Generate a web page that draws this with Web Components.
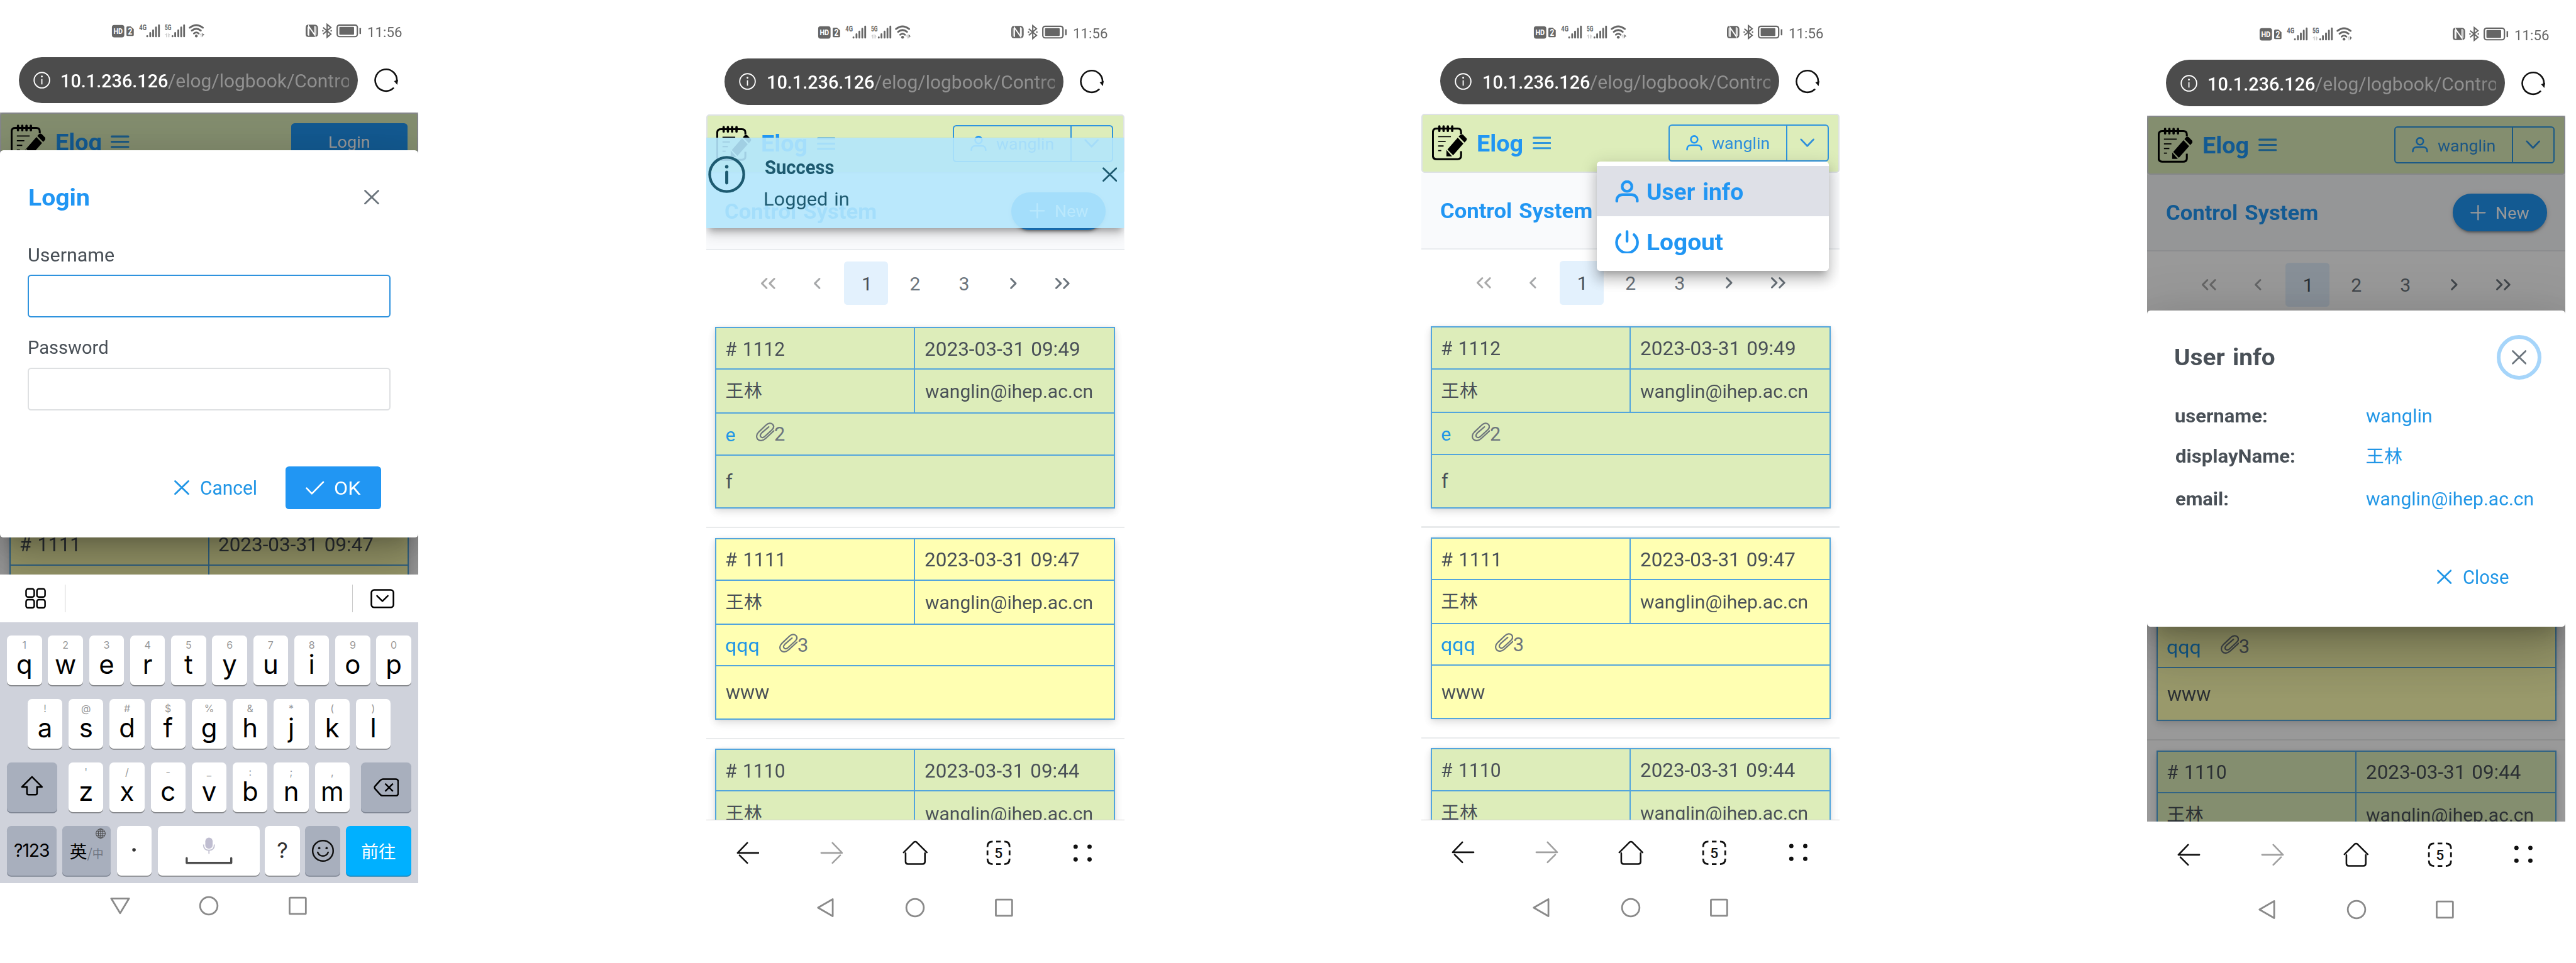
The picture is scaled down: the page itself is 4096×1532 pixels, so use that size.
<!DOCTYPE html>
<html lang="en">
<head>
<meta charset="utf-8">
<title>Elog mobile</title>
<style>
body{margin:0;background:#fff;overflow:hidden;font-family:Roboto,"Noto Sans CJK SC",sans-serif;color:#495057}
main{zoom:.61575;width:6652px;height:2488px;display:flex;align-items:flex-start;overflow:hidden}
phone-shell:nth-child(2){margin:4px 0 0 743px}
phone-shell:nth-child(3){margin:3px 0 0 768px}
phone-shell:nth-child(4){margin:8px 0 0 794px}
</style>
</head>
<body>
<main>
  <phone-shell>
    <app-page style="height:1194px">
      <app-header><login-button></login-button></app-header>
      <book-bar></book-bar>
      <page-nav></page-nav>
      <log-list style="margin-top:-8.5px"></log-list>
      <login-dialog slot="over"></login-dialog>
    </app-page>
    <soft-keyboard></soft-keyboard>
    <nav-bar down></nav-bar>
  </phone-shell>
  <phone-shell>
    <app-page>
      <app-header><user-button></user-button></app-header>
      <book-bar></book-bar>
      <page-nav></page-nav>
      <log-list></log-list>
      <toast-message slot="over"></toast-message>
    </app-page>
    <browser-tools></browser-tools>
    <nav-bar></nav-bar>
  </phone-shell>
  <phone-shell>
    <app-page>
      <app-header><user-button></user-button></app-header>
      <book-bar></book-bar>
      <page-nav></page-nav>
      <log-list></log-list>
      <user-menu slot="over"></user-menu>
    </app-page>
    <browser-tools></browser-tools>
    <nav-bar></nav-bar>
  </phone-shell>
  <phone-shell>
    <app-page>
      <app-header><user-button></user-button></app-header>
      <book-bar></book-bar>
      <page-nav></page-nav>
      <log-list></log-list>
      <info-dialog slot="over"></info-dialog>
    </app-page>
    <browser-tools style="border-color:transparent"></browser-tools>
    <nav-bar></nav-bar>
  </phone-shell>
</main>
<script>
const define = (name, html) => customElements.define(name, class extends HTMLElement {
  constructor() {
    super();
    this.attachShadow({mode: 'open'}).innerHTML =
      '<style>:host{display:block;box-sizing:border-box}*{box-sizing:border-box}svg{display:block;flex:none}</style>' +
      (typeof html === 'function' ? html(this) : html);
  }
});

/* A single line of text whose glyph width and letter spacing are tuned so its ink spans exactly "w" pixels. */
const ctx = document.createElement('canvas').getContext('2d');
customElements.define('fit-text', class extends HTMLElement {
  connectedCallback() {
    if (this.shadowRoot) return;
    const size = +this.getAttribute('s'), w = +this.getAttribute('w'), wt = this.getAttribute('wt') || 400;
    const text = this.getAttribute('t'), cjk = /[\u4e00-\u9fff]/.test(text);
    ctx.font = `${wt} ${size}px Roboto,"Noto Sans CJK SC",sans-serif`;
    const m = ctx.measureText(text), n = text.length;
    const ws = size * .07, spaces = text.split(' ').length - 1;
    const ink = m.actualBoundingBoxLeft + m.actualBoundingBoxRight + ws * spaces;
    const k = cjk || n < 2 ? 1 : Math.min(1.1, Math.max(.94, w / ink));
    const ls = n > 1 ? (w / k - ink) / (n - 1) : 0;
    this.attachShadow({mode: 'open'}).innerHTML =
      `<style>:host{display:block;flex:none;width:${w}px;height:${size}px;white-space:pre;line-height:${size}px;font-size:${size}px;font-weight:${wt};letter-spacing:${ls}px;word-spacing:${ws}px}
       span{display:block;margin-left:${m.actualBoundingBoxLeft * k}px;padding-top:${cjk ? .03 : .045}em;transform:scaleX(${k});transform-origin:0 0}</style><span></span>`;
    this.shadowRoot.querySelector('span').textContent = text;
  }
});
const T = (t, s, w, wt = 400, st = '') => `<fit-text t="${t}" s="${s}" w="${w}" wt="${wt}" style="${st}"></fit-text>`;
const X = (c, w = 39, h = 38, sw = 4.6) => `<svg width="${w}" height="${h}" viewBox="0 0 39 38" fill="none" stroke="${c}" stroke-width="${sw}" stroke-linecap="round"><path d="M2.5 2.5 36.5 35.5M36.5 2.5 2.5 35.5"/></svg>`;
const user = (w, h, sw) => `<svg width="${w}" height="${h}" viewBox="0 0 42 40" fill="none" stroke="#2196f3" stroke-width="${sw}" stroke-linecap="round"><circle cx="21" cy="11" r="8.8"/><path d="M2.5 37.5V36C2.5 30 6.500 26 13 26H29C35.500 26 39.500 30 39.500 36V37.500"/></svg>`;

define('phone-shell', `<style>:host{width:1080px;flex:none}</style><status-bar></status-bar><url-bar></url-bar><slot></slot>`);

define('status-bar', `<style>:host{display:flex;height:147px;padding:60px 43px 0 288px;justify-content:space-between;color:#666}div{display:flex;align-items:flex-start}</style>
<svg width="246" height="40" viewBox="0 0 246 40" fill="#666">
 <rect x="1.500" y="4.500" width="32" height="32" rx="6"/><text x="5.500" y="28" font-size="21" font-weight="700" fill="#fff" textLength="24" lengthAdjust="spacingAndGlyphs">HD</text>
 <path d="M42 8h8l8 7v15q0 3-3 3H42q-3 0-3-3V11q0-3 3-3Z"/><text x="43" y="29" font-size="23" font-weight="700" fill="#fff" textLength="11" lengthAdjust="spacingAndGlyphs">2</text>
 <text x="72" y="18" font-size="20" font-weight="700" textLength="19" lengthAdjust="spacingAndGlyphs">4G</text>
 <text x="138" y="18" font-size="20" font-weight="700" textLength="17" lengthAdjust="spacingAndGlyphs">5G</text>
 <g stroke="#666" stroke-width="4.600" stroke-linecap="round"><path d="M92.700 33v1M100.500 25v9M108 18v16M115.500 11v23M123 5v29M158 33v1M165 25v9M173 18v16M180.500 11v23M188 5v29"/></g>
 <path d="M144 25v11h-2.500V30h-4ZM147 36V25l6 6h-3v5Z" fill="#ccc"/>
 <g fill="none" stroke="#666" stroke-width="4.600" stroke-linecap="round"><path d="M202.500 11.500Q219.500-2 236.500 11.500M208 19Q219.500 9.500 231 19M213.500 26.500Q219.500 21 225.500 26.500"/></g><circle cx="219.500" cy="33" r="3.600"/>
 <path d="M233 25v11h-2V31h-4Z" fill="#ccc"/><path d="M235 36V25l6 6h-3Z"/>
</svg>
<div><svg width="144" height="40" viewBox="0 0 144 40" fill="#666" style="margin-right:17px">
 <path d="M7 3.500h16q9 0 9 9v14q0 9-9 9H7Q0 35.500 0 28V12Q0 3.500 7 3.500Z"/><path d="M8 32V8L24 31V7" fill="none" stroke="#fff" stroke-width="3"/><path d="M5 9v22M27 9v21" stroke="#fff" stroke-width="1.500"/>
 <path d="M45 11 65 28 55.500 36V3L65 11 45 28" fill="none" stroke="#666" stroke-width="3.400"/><circle cx="44.500" cy="19.500" r="2"/><circle cx="66" cy="19.500" r="2"/>
 <rect x="81.500" y="4.500" width="52" height="30" rx="6" fill="none" stroke="#666" stroke-width="3.600"/><rect x="87" y="9.500" width="38" height="20" rx="2"/><rect x="139" y="12" width="4" height="16" rx="1.500"/>
</svg>${T('11:56', 35.5, 87, 400, 'margin-top:5px')}</div>`);

define('url-bar', `<style>:host{display:flex;height:144px;padding-left:48px;align-items:flex-start}
.p{display:flex;align-items:center;width:876px;height:120px;border-radius:60px;background:#4c4c4c;color:#fff;padding-left:38px}
.g{width:467px;overflow:hidden;color:#919191;padding:8px 0;margin-left:1px;-webkit-mask:linear-gradient(90deg,#000 85%,rgba(0,0,0,.7))}</style>
<div class="p"><svg width="44" height="44" fill="none" stroke="#fff" stroke-width="3"><circle cx="22" cy="22" r="20"/><path d="M22 19v14"/><circle cx="22" cy="12.500" r="2.400" fill="#fff" stroke="none"/></svg>
${T('10.1.236.126', 49, 273, 500, 'margin-left:30px')}<div class="g">${T('/elog/logbook/Contro', 49, 471)}</div></div>
<svg width="64" height="64" viewBox="0 0 64 64" style="margin:28px 0 0 40px" fill="none" stroke="#111" stroke-width="4.200" stroke-linecap="round"><path d="M51 52.500A28 28 0 1 1 60 35"/><path d="M54.500 34.500 62 32 60.500 41.500Z" fill="#111" stroke-width="2"/></svg>`);

define('app-page', `<style>:host{height:1823px;position:relative;overflow:hidden}</style><slot></slot><slot name="over"></slot>`);

define('app-header', `<style>:host{display:flex;height:153px;align-items:center;border:3.300px solid #dee2e6;border-radius:8px;background:#ddedba;padding:0 25px 2px 24px;color:#2196f3}
div{flex:1;display:flex;justify-content:flex-end}</style>
<svg width="90" height="91" viewBox="39 44 271 272" fill="none" stroke="#000"><path d="M265 112V98Q265 70 238 70H75Q46 70 46 98V282Q46 308 75 308H238Q265 308 265 282V246" stroke-width="15"/>
<path d="M96 53v35M129 53v35M162 53v35M196 53v35" stroke-width="18" stroke-linecap="round"/><path d="M87 133H186M87 169.500H145M87 205.500H129M87 242H111" stroke-width="9"/>
<g fill="#000" stroke="none"><path d="M239 141 283 187 203 278 159 232ZM246 132 258 119Q269 109 280 118L304 142Q315 152 305 164L292 179ZM151 236 195 286H151Z"/></g></svg>
${T('Elog', 60, 114, 700, 'margin:0 27px 0 28px')}
<svg width="48" height="34" stroke="#2f96dc" stroke-width="5" stroke-linecap="round"><path d="M2.500 3.500h43M2.500 17h43M2.500 30.500h43"/></svg><div><slot></slot></div>`);

define('login-button', `<style>:host{display:flex;width:300px;height:96px;border-radius:9px;background:#2196f3;color:#fff;align-items:center;justify-content:center}</style>${T('Login', 42, 103)}`);

define('user-button', `<style>:host{display:flex;width:414px;height:96px;border:3.300px solid #2e94de;border-radius:9px;color:#2f8fdb}
.a{display:flex;align-items:center;gap:25px;padding-left:42px;width:300px}.b{flex:1;border-left:3.300px solid #2e94de;display:flex;align-items:center;justify-content:center}</style>
<div class="a">${user(42, 40, 4.2)}${T('wanglin', 43, 147)}</div><div class="b"><svg width="38" height="24" fill="none" stroke="#2f8fdb" stroke-width="4.500" stroke-linecap="round" stroke-linejoin="round"><path d="M3 3 19 20 35 3"/></svg></div>`);

define('book-bar', `<style>:host{display:flex;height:198px;align-items:center;justify-content:space-between;padding:0 48px 0 50px;background:#f9fafc;border-bottom:3.300px solid #e9ecef;color:#2196f3}
.n{display:flex;align-items:center;width:243px;height:97px;border-radius:48px;background:#2196f3;color:#fff;padding-left:46px;gap:28px;box-shadow:0 9px 3px -6px rgba(0,0,0,.2),0 6px 6px rgba(0,0,0,.14),0 3px 15px rgba(0,0,0,.12)}</style>
${T('Control System', 53.5, 389, 700)}<div class="n"><svg width="40" height="40" stroke="#fff" stroke-width="3.600" stroke-linecap="round"><path d="M2 20h36M20 2v36"/></svg>${T('New', 41, 83)}</div>`);

const chev = (d, c) => `<svg width="40" height="32" fill="none" stroke="${c}" stroke-width="4.800" stroke-linecap="round" stroke-linejoin="round"><path d="${d}"/></svg>`;
define('page-nav', `<style>:host{display:flex;height:172px;align-items:center;justify-content:center;gap:13.700px;background:#fff;border-radius:9px;color:#6c757d}
div{width:113px;height:113px;border-radius:9px;display:flex;align-items:center;justify-content:center}.on{background:#e3f1fd;color:#495057}</style>
<div>${chev('M16 4 4 16 16 28M36 4 24 16 36 28', '#aaa')}</div><div>${chev('M26 4 14 16 26 28', '#a6a8aa')}</div>
<div class="on">${T('1', 49, 15)}</div><div>${T('2', 49, 24)}</div><div>${T('3', 49, 24)}</div>
<div>${chev('M14 4 26 16 14 28', '#6c757d')}</div><div>${chev('M4 4 16 16 4 28M24 4 36 16 24 28', '#6c757d')}</div>`);

define('log-card', el => {
  const a = k => el.getAttribute(k);
  return `<style>:host{display:grid;grid-template-columns:513px 1fr;grid-template-rows:107.500px 113.500px 108px 1fr;height:470px;margin:0 24px;border:3.300px solid #52a5dd;background:${a('bg')};box-shadow:0 12px 30px rgba(0,0,0,.03),0 0 6px rgba(0,0,0,.06),0 6px 18px rgba(0,0,0,.12)}
div{display:flex;align-items:center;padding-left:25px;border-bottom:3.300px solid #52a5dd}.l{border-right:3.300px solid #52a5dd}.r{padding-left:26px}.w{grid-column:1/3}.z{border:0}</style>
<div class="l">${T('# ' + a('n'), 50.5, a('n') === '1111' ? 146 : 151)}</div><div class="r">${T('2023-03-31 ' + a('time'), 50.5, 398)}</div>
<div class="l">${T('王林', 47, 92)}</div><div class="r">${T('wanglin@ihep.ac.cn', 48.5, 430)}</div>
<div class="w">${T(a('subject'), 49, +a('sw'), 400, 'color:#2196e6')}<svg width="48" height="49" style="margin:0 1px 9px 53px" fill="none" stroke="#6f777d" stroke-width="3.600" stroke-linecap="round" stroke-linejoin="round"><path d="M46 22 25 41.500C18 48 9 48.500 5 44 0 39 1 31 7.500 24.500L26 7C32 1 39 1 43 5 47 9.500 46 15 41 19.500L22.500 36.500C19.500 39.500 15 40 13 37.500 10 35 11 31 14.500 27.500L33 11.500"/></svg>${T(a('files'), 50, 24, 400, 'color:#6c757d')}</div>
<div class="w z">${T(a('text'), 50, +a('tw'))}</div>`;
});

define('log-list', `<style>:host{margin-top:26.500px}.s{height:3.300px;background:#e9ebec;margin:46.700px 0 25px}</style>
<log-card n="1112" time="09:49" bg="#ddedba" subject="e" sw="24" files="2" text="f" tw="17"></log-card><div class="s"></div>
<log-card n="1111" time="09:47" bg="#ffffb2" subject="qqq" sw="84" files="3" text="www" tw="111"></log-card><div class="s"></div>
<log-card n="1110" time="09:44" bg="#ddedba" subject="e" sw="24" files="2" text="f" tw="17"></log-card>`);

const shade = `<style>:host{position:absolute;inset:0;background:rgba(0,0,0,.4)}
.m{background:#fff;border-radius:9px;box-shadow:0 33px 45px -21px rgba(0,0,0,.2),0 72px 114px 9px rgba(0,0,0,.14),0 27px 138px 24px rgba(0,0,0,.12)}
.row{display:flex;align-items:center}.sb{justify-content:space-between}.e{justify-content:flex-end}</style>`;

define('login-dialog', shade + `<style>.m{margin-top:98px;height:999px;padding:90px 72px 0;color:#495057}:host{display:flow-root}
.i{height:110px;border:3.300px solid #dee0e2;border-radius:9px}.i.f{border-color:#2f93de}.lb{padding-left:2px;margin-bottom:28px}
.ok{display:flex;align-items:center;width:246px;height:110px;border-radius:9px;background:#2196f3;color:#fff;padding-left:52px;gap:27px;margin-left:77px}</style>
<div class="m"><div class="row sb" style="padding:0 29px 0 4px;margin-bottom:95px">${T('Login', 60, 153, 700, 'color:#2196f3')}${X('#6c757d')}</div>
<div class="lb">${T('Username', 48, 220)}</div><div class="i f"></div>
<div class="lb" style="margin-top:54px">${T('Password', 48, 203)}</div><div class="i"></div>
<div class="row e" style="margin-top:145px;padding-right:24px;color:#2196e6">${X('#2196e6')}${T('Cancel', 50, 143, 400, 'margin-left:30px')}
<div class="ok"><svg width="48" height="36" fill="none" stroke="#fff" stroke-width="4.200" stroke-linecap="round" stroke-linejoin="round"><path d="M2.500 19 16 33 45.500 3"/></svg>${T('OK', 49, 67)}</div></div></div>`);

define('info-dialog', shade + `<style>.m{margin-top:504px;height:816px;padding:62px 62px 0 73px;color:#495057}:host{display:flow-root}
.c{width:116px;height:116px;border:10px solid #a6d5fa;border-radius:50%;display:flex;align-items:center;justify-content:center}
.g{display:grid;grid-template-columns:493px 1fr;color:#495057}.g>:nth-child(even){color:#2196e6}</style>
<div class="m"><div class="row sb">${T('User info', 60, 256, 700)}<div class="c">${X('#6c757d', 38, 37)}</div></div>
<div class="g" style="margin-top:67px">${T('username:', 48.5, 235, 700)}${T('wanglin', 48.5, 168)}</div>
<div class="g" style="margin-top:56px">${T('displayName:', 48.5, 306, 700)}${T('王林', 47, 92, 400, 'margin-top:3px')}</div>
<div class="g" style="margin-top:60px">${T('email:', 48.5, 134, 700)}${T('wanglin@ihep.ac.cn', 48.5, 430)}</div>
<div class="row e" style="margin-top:155px;padding-right:86px;color:#2196e6">${X('#2196e6', 38, 38)}${T('Close', 50, 116, 400, 'margin-left:30px')}</div></div>`);

define('toast-message', `<style>:host{position:absolute;left:0;right:0;top:60px;height:234px;display:flex;align-items:flex-start;background:rgba(179,229,252,.9);color:#1d5a70;padding:48px 18px 0 6px;box-shadow:0 15px 15px -9px rgba(0,0,0,.2),0 18px 30px 0 rgba(0,0,0,.14),0 6px 24px 0 rgba(0,0,0,.1)}
:host{clip-path:inset(0 0 -80px 0)}.t{margin-left:50px;flex:1;padding-top:4px}</style>
<svg width="96" height="96" fill="none" stroke="#1d5a70"><circle cx="48" cy="48" r="44" stroke-width="7"/><path d="M48 42v28" stroke-width="8" stroke-linecap="round"/><circle cx="48" cy="28" r="4.500" fill="#1d5a70" stroke="none"/></svg>
<div class="t">${T('Success', 50, 177, 700)}${T('Logged in', 49, 215, 400, 'margin-top:31px')}</div><div style="padding-top:29px">${X('#1d5a70', 38, 38, 4.8)}</div>`);

define('user-menu', `<style>:host{position:absolute;left:452px;top:123px;width:600px;height:283px;background:#fff;border-radius:9px;padding:12px 0;color:#2196f3;box-shadow:0 15px 15px -9px rgba(0,0,0,.2),0 24px 30px 3px rgba(0,0,0,.14),0 9px 42px 6px rgba(0,0,0,.12)}
div{display:flex;height:130px;align-items:center;padding-left:47px;gap:23px}.on{background:#dee0e7}</style>
<div class="on">${user(62, 57, 5)}${T('User info', 59, 246, 700)}</div>
<div><svg width="62" height="60" fill="none" stroke="#2196f3" stroke-width="7" stroke-linecap="round"><path d="M13 12A27 27 0 1 0 49 12M31 4V29"/></svg>${T('Logout', 59, 194, 700)}</div>`);

const tool = (w, h, c, body) => `<svg width="${w}" height="${h}" viewBox="0 0 ${w} ${h}" fill="none" stroke="${c}" stroke-width="4.200" stroke-linecap="round" stroke-linejoin="round">${body}</svg>`;
define('browser-tools', `<style>:host{display:grid;grid-template-columns:repeat(5,216px);height:170px;border-top:2px solid #d0d0d0;align-items:center;justify-items:center}</style>
${tool(60, 58, '#111', '<path d="M28 3 3 29H57M8 35 28 55"/>')}${tool(60, 58, '#a0a0a0', '<path d="M32 3 57 29H3M52 35 32 55"/>')}
${tool(66, 64, '#111', '<path d="M3 31 29 5Q33 1.500 37 5L63 31M8 33V55Q8 61 14 61H52Q58 61 58 55V33"/>')}
<svg width="64" height="64" fill="none" stroke="#111" stroke-width="4.500"><path d="M3.500 17V16Q3.500 3 16 3h1M47 3h1Q60.500 3 60.500 16v1M60.500 47v1Q60.500 61 48 61h-1M17 61h-1Q3.500 61 3.500 48v-1M26 3H38M26 61H38M3.500 26V38M60.500 26V38"/><text x="32" y="45" text-anchor="middle" font-size="37" font-weight="500" fill="#111" stroke="none">5</text></svg>
<svg width="50" height="50" fill="#111"><circle cx="7" cy="8" r="5.600"/><circle cx="43" cy="8" r="5.600"/><circle cx="7" cy="41" r="5.600"/><circle cx="43" cy="41" r="5.600"/></svg>`);

define('nav-bar', el => `<style>:host{display:flex;height:116px;align-items:center;justify-content:center;gap:178px}</style>
<svg width="52" height="52" fill="none" stroke="#8a8a8a" stroke-width="4.500" stroke-linejoin="round">${el.hasAttribute('down') ? '<path d="M3 7H49L26 45Z"/>' : '<path d="M44 4V48L6 26Z"/>'}</svg>
<svg width="52" height="52" fill="none" stroke="#8a8a8a" stroke-width="4.500"><circle cx="26" cy="26" r="22.500"/></svg>
<svg width="52" height="52" fill="none" stroke="#8a8a8a" stroke-width="4.500"><rect x="4" y="5" width="42" height="42" rx="2"/></svg>`);

const key = (big, small) => `<div class="k"><i>${small}</i><b>${big}</b></div>`;
const keys = (l, s) => [...l].map((c, i) => key(c, s[i].replace('&', '&amp;'))).join('');
define('soft-keyboard', `<style>:host{height:797px;background:#cfd2db;font-family:Inter,"Noto Sans CJK SC",sans-serif;color:#000}
.bar{height:123px;background:#fff;display:flex;align-items:center;padding:0 61px 0 63px}.bar u{width:1.700px;height:72px;background:#ccc}
.row{display:flex;height:129px;margin-bottom:35px;justify-content:center;gap:16px}.r1{margin-top:34px}
.k{width:90px;height:129px;border-radius:11px;background:#fff;box-shadow:0 3px 0 #85878b;display:flex;flex-direction:column;align-items:center;padding-top:12px}
i{font:26px/26px Inter,sans-serif;color:#999;height:26px}b{font-weight:400;font-size:68px;line-height:68px;margin-top:3px}
.g{background:#a8afbd;box-shadow:0 3px 0 #7f8694}.c{justify-content:center;padding:0}</style>
<div class="bar"><svg width="56" height="56" fill="none" stroke="#000" stroke-width="4"><rect x="4" y="3" width="21" height="21" rx="5"/><rect x="32" y="3" width="21" height="21" rx="5"/><rect x="4" y="31" width="21" height="21" rx="5"/><rect x="32" y="31" width="21" height="21" rx="5"/></svg>
<u style="margin:0 740px 0 49px"></u><u style="margin-right:46px"></u><svg width="62" height="50" fill="none" stroke="#000" stroke-width="4.200" stroke-linecap="round" stroke-linejoin="round"><rect x="2.500" y="2.500" width="57" height="45" rx="7"/><path d="M17 17.500 31 31.500 45 17.500" stroke-width="4"/></svg></div>
<div class="row r1">${keys('qwertyuiop', '1234567890')}</div>
<div class="row">${keys('asdfghjkl', '!@#$%&*()')}</div>
<div class="row"><div class="k g c" style="width:130px;margin-right:13px"><svg width="58" height="52" style="margin-bottom:8px" fill="none" stroke="#000" stroke-width="4.200" stroke-linejoin="round"><path d="M29 3 55 29H42V45Q42 49 38 49H20Q16 49 16 45V29H3Z"/></svg></div>
${keys('zxcvbnm', "'/-_:;,")}<div class="k g c" style="width:130px;margin-left:13px"><svg width="66" height="48" fill="none" stroke="#000" stroke-width="4" stroke-linejoin="round"><path d="M24 2.500H57Q63.500 2.500 63.500 9V39Q63.500 45.500 57 45.500H24Q20 45.500 17 42L3.500 27Q1.500 24 3.500 21L17 6Q20 2.500 24 2.500Z"/><path d="M30 14 50 34M50 14 30 34"/></svg></div></div>
<div class="row" style="margin:0"><div class="k g c" style="width:128px"><span style="font-size:46px;line-height:46px;letter-spacing:-1.800px">?123</span></div>
<div class="k g" style="width:124px;padding:7px 0 0"><svg width="26" height="26" style="align-self:flex-end;margin-right:13px" fill="none" stroke="#444" stroke-width="1.600"><circle cx="13" cy="13" r="12"/><ellipse cx="13" cy="13" rx="6" ry="12"/><path d="M13 1v24M1 13h24M3 7h20M3 19h20"/></svg><span style="font:45px/50px 'Noto Sans CJK SC',sans-serif;white-space:nowrap;margin-top:6px">英<span style="font-size:29px;color:#6d7380"><span style="font-size:34px">/</span>中</span></span></div>
<div class="k c"><svg width="10" height="10" style="margin-bottom:6px"><circle cx="5" cy="5" r="4.500" fill="#333"/></svg></div>
<div class="k c" style="width:263px"><svg width="263" height="129" fill="none"><rect x="122.500" y="30" width="19" height="29" rx="9.500" fill="#bfbdd0"/><path d="M118 48Q118 63 132 63T146 48M132 63V72" stroke="#c3c2d2" stroke-width="3"/><path d="M74.500 83V95.500H189.500V83" stroke="#4c4c4c" stroke-width="5.500" stroke-linejoin="round" stroke-linecap="round"/></svg></div>
<div class="k c" style="margin-left:-2px"><span style="font-size:56px;line-height:56px;color:#333">?</span></div>
<div class="k g c" style="margin-left:-2px"><svg width="60" height="60" fill="none" stroke="#111" stroke-width="4" stroke-linecap="round"><circle cx="30" cy="30" r="26.500"/><path d="M16.500 34Q20 43.500 30 43.500T43.500 34"/><circle cx="20.500" cy="23" r="3" fill="#111" stroke="none"/><circle cx="39.500" cy="23" r="3" fill="#111" stroke="none"/></svg></div>
<div class="k c" style="width:170px;margin-left:-2px;background:#00b0ff;box-shadow:0 3px 0 #2186b8"><span style="font:45px/50px 'Noto Sans CJK SC',sans-serif;color:#fff">前往</span></div></div>`);
</script>
</body>
</html>
